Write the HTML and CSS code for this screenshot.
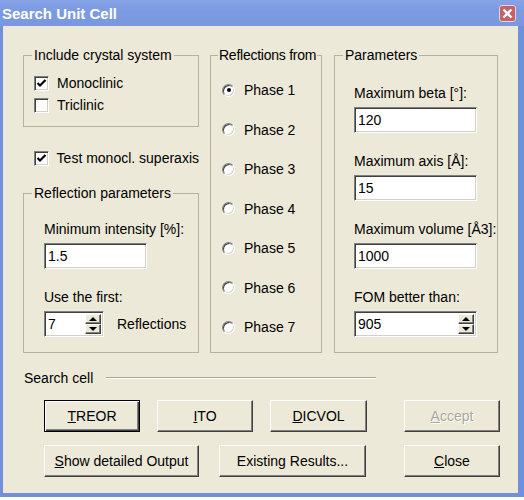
FILE: index.html
```html
<!DOCTYPE html>
<html lang="en">

<head>
    <meta charset="UTF-8">
    <title>Search Unit Cell</title>
    <link rel="stylesheet" href="styles.css">
</head>

<body>
    <div class="window">
        <div class="titlebar">
            <span class="title">Search Unit Cell</span>
            <span class="close-btn">
                <svg width="11" height="11" viewBox="0 0 11 11">
                    <path d="M1.5 1.5 L9.5 9.5 M9.5 1.5 L1.5 9.5" stroke="#fff" stroke-width="2.4" fill="none"/>
                </svg>
            </span>
        </div>

        <div class="client">
            <div class="groups">
                <div class="col-left">
                    <fieldset class="group">
                        <legend>Include crystal system</legend>
                        <div class="group-body crystal-body">
                            <label class="check-row">
                                <span class="checkbox">
                                    <svg width="11" height="11" viewBox="0 0 11 11"><path d="M1.5 5 L4 7.5 L9.5 2" stroke="#000" stroke-width="2.2" fill="none"/></svg>
                                </span>
                                Monoclinic
                            </label>
                            <label class="check-row"><span class="checkbox"></span>Triclinic</label>
                        </div>
                    </fieldset>

                    <label class="check-row superaxis">
                        <span class="checkbox">
                            <svg width="11" height="11" viewBox="0 0 11 11"><path d="M1.5 5 L4 7.5 L9.5 2" stroke="#000" stroke-width="2.2" fill="none"/></svg>
                        </span>
                        Test monocl. superaxis
                    </label>

                    <fieldset class="group refl-group">
                        <legend>Reflection parameters</legend>
                        <div class="group-body fields-body refl-body">
                            <div class="field-label">Minimum intensity [%]:</div>
                            <input class="textbox small-box" type="text" value="1.5">
                            <div class="field-label gap-top">Use the first:</div>
                            <div class="spin-row">
                                <div class="spinbox small-spin">
                                    <input type="text" value="7">
                                    <span class="spin-btns">
                                        <span class="spin-btn"><span class="arrow-up"></span></span>
                                        <span class="spin-btn"><span class="arrow-down"></span></span>
                                    </span>
                                </div>
                                <span>Reflections</span>
                            </div>
                        </div>
                    </fieldset>
                </div>

                <fieldset class="group col-mid">
                    <legend>Reflections from</legend>
                    <div class="group-body phase-body">
                        <label class="radio-row"><span class="radio selected"></span>Phase 1</label>
                        <label class="radio-row"><span class="radio"></span>Phase 2</label>
                        <label class="radio-row"><span class="radio"></span>Phase 3</label>
                        <label class="radio-row"><span class="radio"></span>Phase 4</label>
                        <label class="radio-row"><span class="radio"></span>Phase 5</label>
                        <label class="radio-row"><span class="radio"></span>Phase 6</label>
                        <label class="radio-row"><span class="radio"></span>Phase 7</label>
                    </div>
                </fieldset>

                <fieldset class="group col-right">
                    <legend>Parameters</legend>
                    <div class="group-body fields-body params-body">
                        <div class="field-label">Maximum beta [°]:</div>
                        <input class="textbox wide-box" type="text" value="120">
                        <div class="field-label gap-top">Maximum axis [Å]:</div>
                        <input class="textbox wide-box" type="text" value="15">
                        <div class="field-label gap-top">Maximum volume [Å3]:</div>
                        <input class="textbox wide-box" type="text" value="1000">
                        <div class="field-label gap-top">FOM better than:</div>
                        <div class="spinbox wide-box">
                            <input type="text" value="905">
                            <span class="spin-btns">
                                <span class="spin-btn"><span class="arrow-up"></span></span>
                                <span class="spin-btn"><span class="arrow-down"></span></span>
                            </span>
                        </div>
                    </div>
                </fieldset>
            </div>

            <div class="search-cell">
                <span>Search cell</span>
                <span class="sep-line"></span>
            </div>

            <div class="btn-row">
                <button class="btn btn-default w-treor"><u>T</u>REOR</button>
                <button class="btn w-ito"><u>I</u>TO</button>
                <button class="btn w-dicvol"><u>D</u>ICVOL</button>
                <button class="btn btn-disabled w-accept"><u>A</u>ccept</button>
            </div>
            <div class="btn-row">
                <button class="btn w-show"><u>S</u>how detailed Output</button>
                <button class="btn w-existing">Existing Results...</button>
                <button class="btn w-close"><u>C</u>lose</button>
            </div>
        </div>
    </div>
</body>

</html>
```

FILE: styles.css
```css
body {
    margin: 0;
    background-color: #fff;
    font-family: "Liberation Sans", Arial, sans-serif;
    font-size: 14px;
    color: #000;
    white-space: nowrap;
}

.window {
    width: 524px;
    height: 497px;
    box-sizing: border-box;
    padding: 0 6px 4px 3px;
    background-color: #7090dc;
    display: flex;
    flex-direction: column;
}

.titlebar {
    height: 26px;
    margin: 0 -6px 0 -3px;
    padding: 0 8px 0 2px;
    display: flex;
    align-items: center;
    justify-content: space-between;
    background: linear-gradient(#86a3e6, #7b9ae1 45%, #7a98df);
}

.title {
    color: #fff;
    font-weight: bold;
    font-size: 15px;
}

.close-btn {
    width: 17px;
    height: 17px;
    box-sizing: border-box;
    border: 1px solid #e9d0d3;
    border-radius: 3px;
    background-color: #c2626a;
    display: flex;
    align-items: center;
    justify-content: center;
}

.client {
    flex: 1;
    background-color: #ece9d8;
    padding: 20px 0 0 20px;
}

.groups {
    display: flex;
    align-items: stretch;
}

.group {
    box-sizing: border-box;
    margin: 0;
    padding: 0;
    border: 1px solid #b3b1a4;
    min-width: 0;
}

.group legend {
    margin-left: 8px;
    padding: 0 2px;
    line-height: 18px;
}

.col-left {
    width: 176px;
    margin-right: 11px;
    display: flex;
    flex-direction: column;
}

.col-mid {
    width: 112px;
    margin-right: 12px;
}

.col-right {
    width: 164px;
}

.col-mid legend {
    margin-left: 7px;
    padding: 0 1px;
    letter-spacing: -0.25px;
}

.crystal-body {
    padding: 8px 0 10px 10px;
}

.check-row {
    display: flex;
    align-items: center;
    height: 22px;
    gap: 8px;
}

.superaxis {
    margin: 20px 0 15px 11px;
}

.checkbox {
    width: 15px;
    height: 15px;
    box-sizing: border-box;
    background-color: #fff;
    border: 1px solid;
    border-color: #808080 #fff #fff #808080;
    box-shadow: inset 1px 1px 0 #404040, inset -1px -1px 0 #d4d0c8;
    display: flex;
    align-items: center;
    justify-content: center;
}

.fields-body {
    display: flex;
    flex-direction: column;
    align-items: flex-start;
    padding-bottom: 15px;
}

.refl-body {
    padding-top: 18px;
    padding-left: 20px;
}

.params-body {
    padding-top: 20px;
    padding-left: 19px;
}

.field-label {
    line-height: 18px;
    margin-bottom: 5px;
}

.gap-top {
    margin-top: 19px;
}

.textbox,
.spinbox {
    box-sizing: border-box;
    height: 26px;
    background-color: #fff;
    border: 1px solid;
    border-color: #808080 #fff #fff #808080;
    box-shadow: inset 1px 1px 0 #404040, inset -1px -1px 0 #d4d0c8;
}

.textbox {
    margin: 0;
    padding: 0 3px;
    font: inherit;
    color: #000;
    outline: none;
}

.small-box {
    width: 103px;
}

.wide-box {
    width: 123px;
}

.spinbox {
    display: flex;
    align-items: stretch;
    padding: 2px;
}

.spinbox input {
    flex: 1;
    min-width: 0;
    border: none;
    margin: 0;
    padding: 0 1px;
    font: inherit;
    background: transparent;
    outline: none;
}

.small-spin {
    width: 60px;
}

.spin-row {
    display: flex;
    align-items: center;
    gap: 13px;
}

.spin-btns {
    width: 16px;
    display: flex;
    flex-direction: column;
}

.spin-btn {
    flex: 1;
    box-sizing: border-box;
    background-color: #ece9d8;
    border: 1px solid;
    border-color: #fff #404040 #404040 #fff;
    box-shadow: inset -1px -1px 0 #808080;
    display: flex;
    align-items: center;
    justify-content: center;
}

.arrow-up {
    border-left: 4px solid transparent;
    border-right: 4px solid transparent;
    border-bottom: 4px solid #000;
}

.arrow-down {
    border-left: 4px solid transparent;
    border-right: 4px solid transparent;
    border-top: 4px solid #000;
}

.phase-body {
    display: flex;
    flex-direction: column;
    gap: 17.5px;
    padding: 15px 0 14px 11px;
}

.radio-row {
    display: flex;
    align-items: center;
    height: 22px;
    gap: 9px;
}

.radio {
    width: 13px;
    height: 13px;
    box-sizing: border-box;
    border-radius: 50%;
    background-color: #fff;
    border: 1px solid;
    border-color: #808080 #fff #fff #808080;
    box-shadow: inset 1px 1px 0 #404040, inset -1px -1px 0 #d4d0c8;
    display: flex;
    align-items: center;
    justify-content: center;
}

.radio.selected::after {
    content: "";
    width: 4px;
    height: 4px;
    border-radius: 50%;
    background-color: #000;
}

.search-cell {
    display: flex;
    align-items: center;
    height: 18px;
    margin: 16px 0 0 1px;
}

.sep-line {
    width: 270px;
    margin-left: 13px;
    border-top: 1px solid #aca899;
    border-bottom: 1px solid #fff;
}

.btn-row {
    display: flex;
    margin: 13px 0 0 21px;
}

.btn {
    box-sizing: border-box;
    height: 32px;
    margin: 0;
    padding: 0;
    font: inherit;
    color: #000;
    background-color: #ece9d8;
    border: 1px solid;
    border-color: #fff #404040 #404040 #fff;
    box-shadow: inset -1px -1px 0 #808080;
}

.btn-default {
    border-color: #000;
    box-shadow: inset 1px 1px 0 #fff, inset -1px -1px 0 #404040, inset -2px -2px 0 #808080;
}

.btn-disabled {
    color: #aca899;
    text-shadow: 1px 1px 0 #fff;
}

.w-treor { width: 96px; margin-right: 17px; }
.w-ito { width: 96px; margin-right: 17px; }
.w-dicvol { width: 97px; margin-right: 37px; }
.w-accept { width: 96px; }
.w-show { width: 155px; margin-right: 20px; }
.w-existing { width: 147px; margin-right: 38px; }
.w-close { width: 96px; }
```
